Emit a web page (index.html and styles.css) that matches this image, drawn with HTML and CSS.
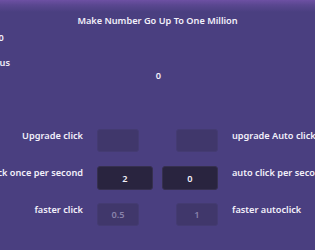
FILE: index.html
```html
<!DOCTYPE html>
<html>
<head>
<meta charset="utf-8">
<link rel="stylesheet" href="styles.css">
</head>
<body>
<div class="screen">
  <div class="title">Make Number Go Up To One Million</div>
  <div class="stat stat-score">Score: 0</div>
  <div class="stat stat-bonus">Bonus</div>
  <div class="bonus-value">0</div>
  <div class="grid">
    <div class="label left">Upgrade click</div>
    <div class="box off small start"></div>
    <div class="box off small end"></div>
    <div class="label right">upgrade Auto click</div>

    <div class="label left">click once per second</div>
    <div class="box on">2</div>
    <div class="box on">0</div>
    <div class="label right">auto click per second</div>

    <div class="label left">faster click</div>
    <div class="box off small start">0.5</div>
    <div class="box off small end">1</div>
    <div class="label right">faster autoclick</div>
  </div>
</div>
</body>
</html>
```
FILE: styles.css
```css
html, body {
  margin: 0;
  padding: 0;
}
body {
  width: 315px;
  height: 250px;
  overflow: hidden;
  background: #4a3f80;
  font-family: "Noto Sans", "Open Sans", sans-serif;
  font-weight: 600;
  font-size: 9.2px;
  color: #f2f0fa;
}
.screen {
  height: 250px;
  background: linear-gradient(to bottom, #6d50a3 0px, #5a4790 5px, #4a3f80 12px, #4a3f80 100%);
  overflow: hidden;
}
.title {
  text-align: center;
  padding-top: 14px;
  line-height: 14px;
}
.stat {
  white-space: nowrap;
  line-height: 14px;
}
.stat-score {
  margin-top: 3px;
  margin-left: -31px;
}
.stat-bonus {
  margin-top: 11px;
  margin-left: -18px;
}
.bonus-value {
  text-align: center;
  line-height: 14px;
  margin-top: -1px;
  padding-left: 2px;
}
.grid {
  display: grid;
  grid-template-columns: 88px 56px 56px 120px;
  grid-auto-rows: 23px;
  column-gap: 9px;
  row-gap: 14px;
  margin-top: 46px;
}
.label {
  white-space: nowrap;
  align-self: start;
  line-height: 14px;
}
.label.left {
  text-align: right;
  padding-right: 5px;
  direction: rtl;
}
.label.right {
  padding-left: 5px;
}
.box {
  border-radius: 3px;
  display: flex;
  align-items: center;
  justify-content: center;
  box-sizing: border-box;
}
.box.small {
  width: 42px;
}
.box.start {
  justify-self: start;
}
.box.end {
  justify-self: end;
}
.box.off {
  background: #40376b;
  border: 1px solid #443b72;
  color: #8882aa;
}
.box.on {
  background: #29243f;
  border: 1px solid #36304f;
  color: #f2f0fa;
  height: 24px;
}
```
